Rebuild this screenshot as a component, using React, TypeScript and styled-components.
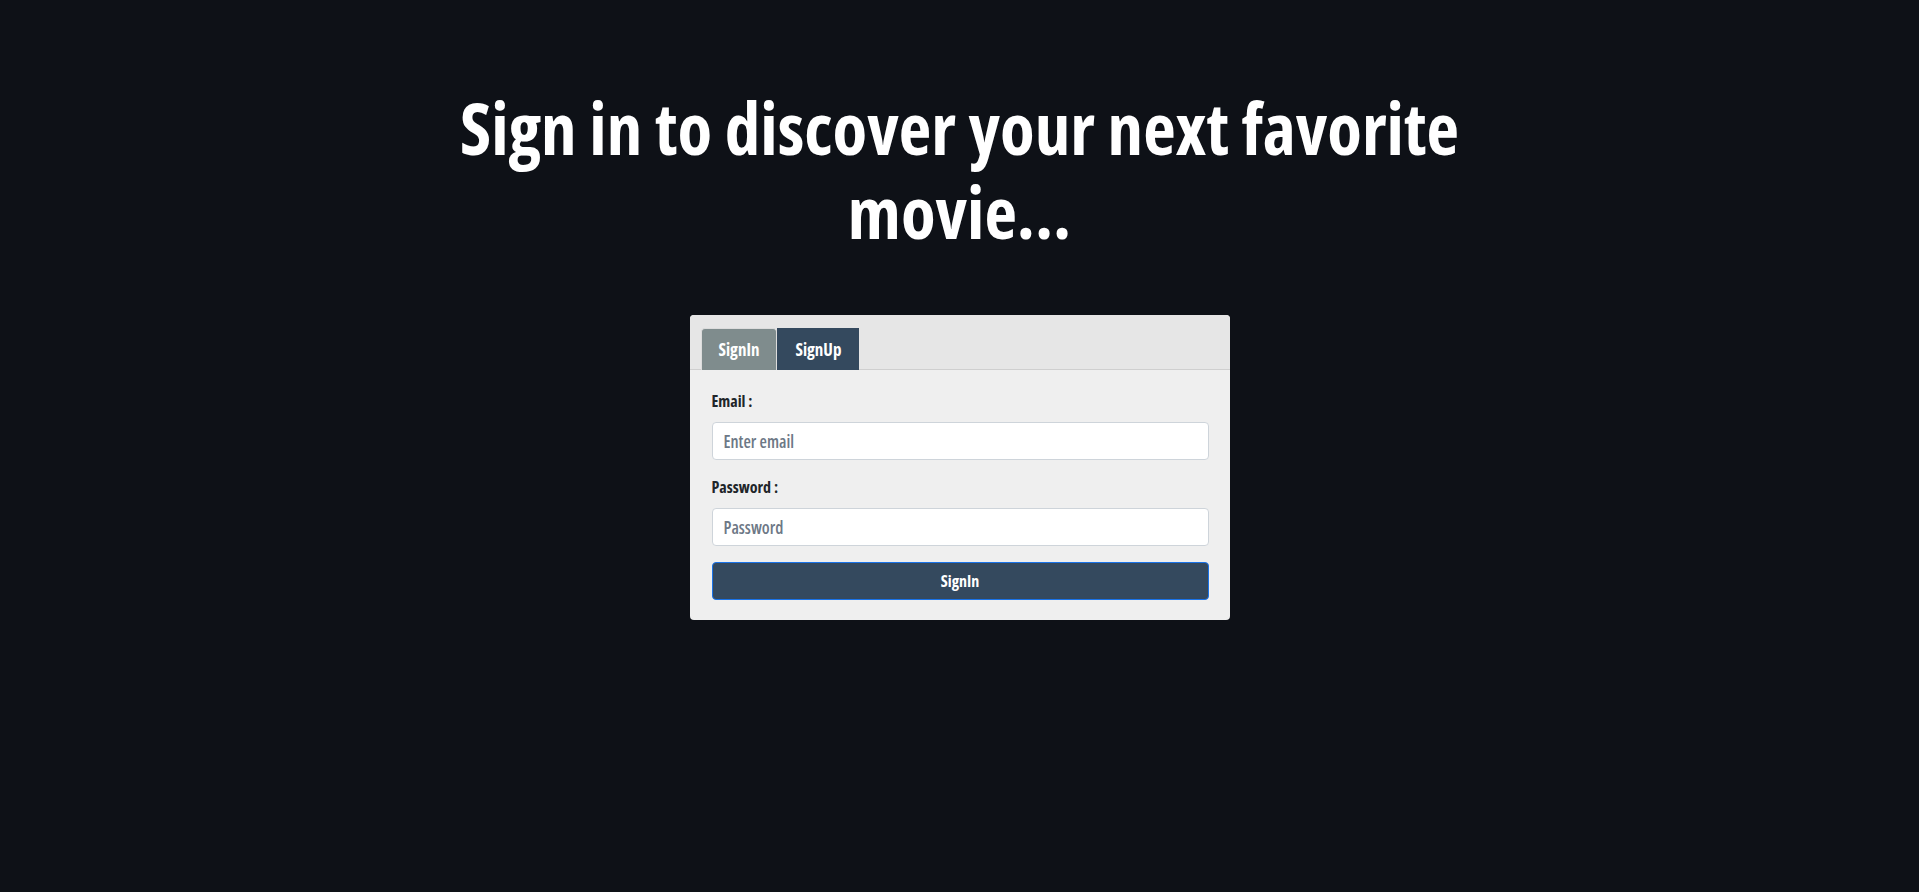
import React, { useState } from "react";
import styled, { createGlobalStyle } from "styled-components";

const GlobalStyle = createGlobalStyle`
  html, body { margin: 0; padding: 0; background: #0e1117; }
  body { font-family: "Open Sans", "Noto Sans", sans-serif; font-stretch: 75%; }
  * { box-sizing: border-box; }
`;

const Page = styled.main`
  min-height: 892px;
  background: #0e1117;
  padding-top: 86px;
  display: flex;
  flex-direction: column;
  align-items: center;
`;

const Title = styled.h1`
  margin: 0;
  max-width: 1100px;
  text-align: center;
  color: #ffffff;
  font-family: "Open Sans", sans-serif;
  font-stretch: 75%;
  font-weight: 700;
  font-size: 71px;
  line-height: 84px;
  letter-spacing: 0;
`;

const Card = styled.section`
  margin-top: 61px;
  width: 540px;
  background: #efefef;
  border-radius: 4px;
  overflow: hidden;
`;

const CardHeader = styled.div`
  display: flex;
  align-items: flex-end;
  height: 55px;
  padding: 13px 11px 0;
  background: #e6e6e6;
  border-bottom: 1px solid #cfcfcf;
`;

const Tab = styled.button<{ $active?: boolean }>`
  height: 42px;
  margin-bottom: -1px;
  padding: 0 17px;
  border: 1px solid ${(p) => (p.$active ? "#dcdcdc" : "#34495e")};
  border-bottom: none;
  border-radius: ${(p) => (p.$active ? "4px 4px 0 0" : "0")};
  background: ${(p) => (p.$active ? "#7f8c8d" : "#34495e")};
  color: #ffffff;
  font-family: "Open Sans", sans-serif;
  font-stretch: 75%;
  font-weight: 700;
  font-size: 17px;
  cursor: pointer;
`;

const CardBody = styled.form`
  display: flex;
  flex-direction: column;
  padding: 19px 21px 20px 22px;
`;

const Label = styled.label<{ $gap?: number }>`
  display: block;
  margin-top: ${(p) => p.$gap ?? 0}px;
  margin-bottom: 9px;
  color: #212529;
  font-family: "Open Sans", sans-serif;
  font-stretch: 75%;
  font-weight: 700;
  font-size: 16px;
  line-height: 24px;
`;

const Input = styled.input`
  display: block;
  width: 100%;
  height: 38px;
  padding: 0 11px;
  border: 1px solid #ced4da;
  border-radius: 4px;
  background: #ffffff;
  color: #212529;
  font-family: "Open Sans", sans-serif;
  font-stretch: 75%;
  font-weight: 600;
  font-size: 17px;
  outline: none;
  &::placeholder {
    color: #6d7886;
    opacity: 1;
  }
`;

const SubmitButton = styled.button`
  margin-top: 16px;
  width: 100%;
  height: 38px;
  border: 1px solid #1a73e8;
  border-radius: 4px;
  background: #34495e;
  color: #ffffff;
  font-family: "Open Sans", sans-serif;
  font-stretch: 75%;
  font-weight: 700;
  font-size: 16px;
  cursor: pointer;
`;

export default function App() {
  const [tab, setTab] = useState<"in" | "up">("in");
  return (
    <>
      <GlobalStyle />
      <Page>
        <Title>Sign in to discover your next favorite movie...</Title>
        <Card>
          <CardHeader>
            <Tab type="button" $active={tab === "in"} onClick={() => setTab("in")}>
              SignIn
            </Tab>
            <Tab type="button" $active={tab === "up"} onClick={() => setTab("up")}>
              SignUp
            </Tab>
          </CardHeader>
          <CardBody onSubmit={(e) => e.preventDefault()}>
            <Label htmlFor="email">Email :</Label>
            <Input id="email" type="email" placeholder="Enter email" />
            <Label htmlFor="password" $gap={15}>
              Password :
            </Label>
            <Input id="password" type="password" placeholder="Password" />
            <SubmitButton type="submit">SignIn</SubmitButton>
          </CardBody>
        </Card>
      </Page>
    </>
  );
}
